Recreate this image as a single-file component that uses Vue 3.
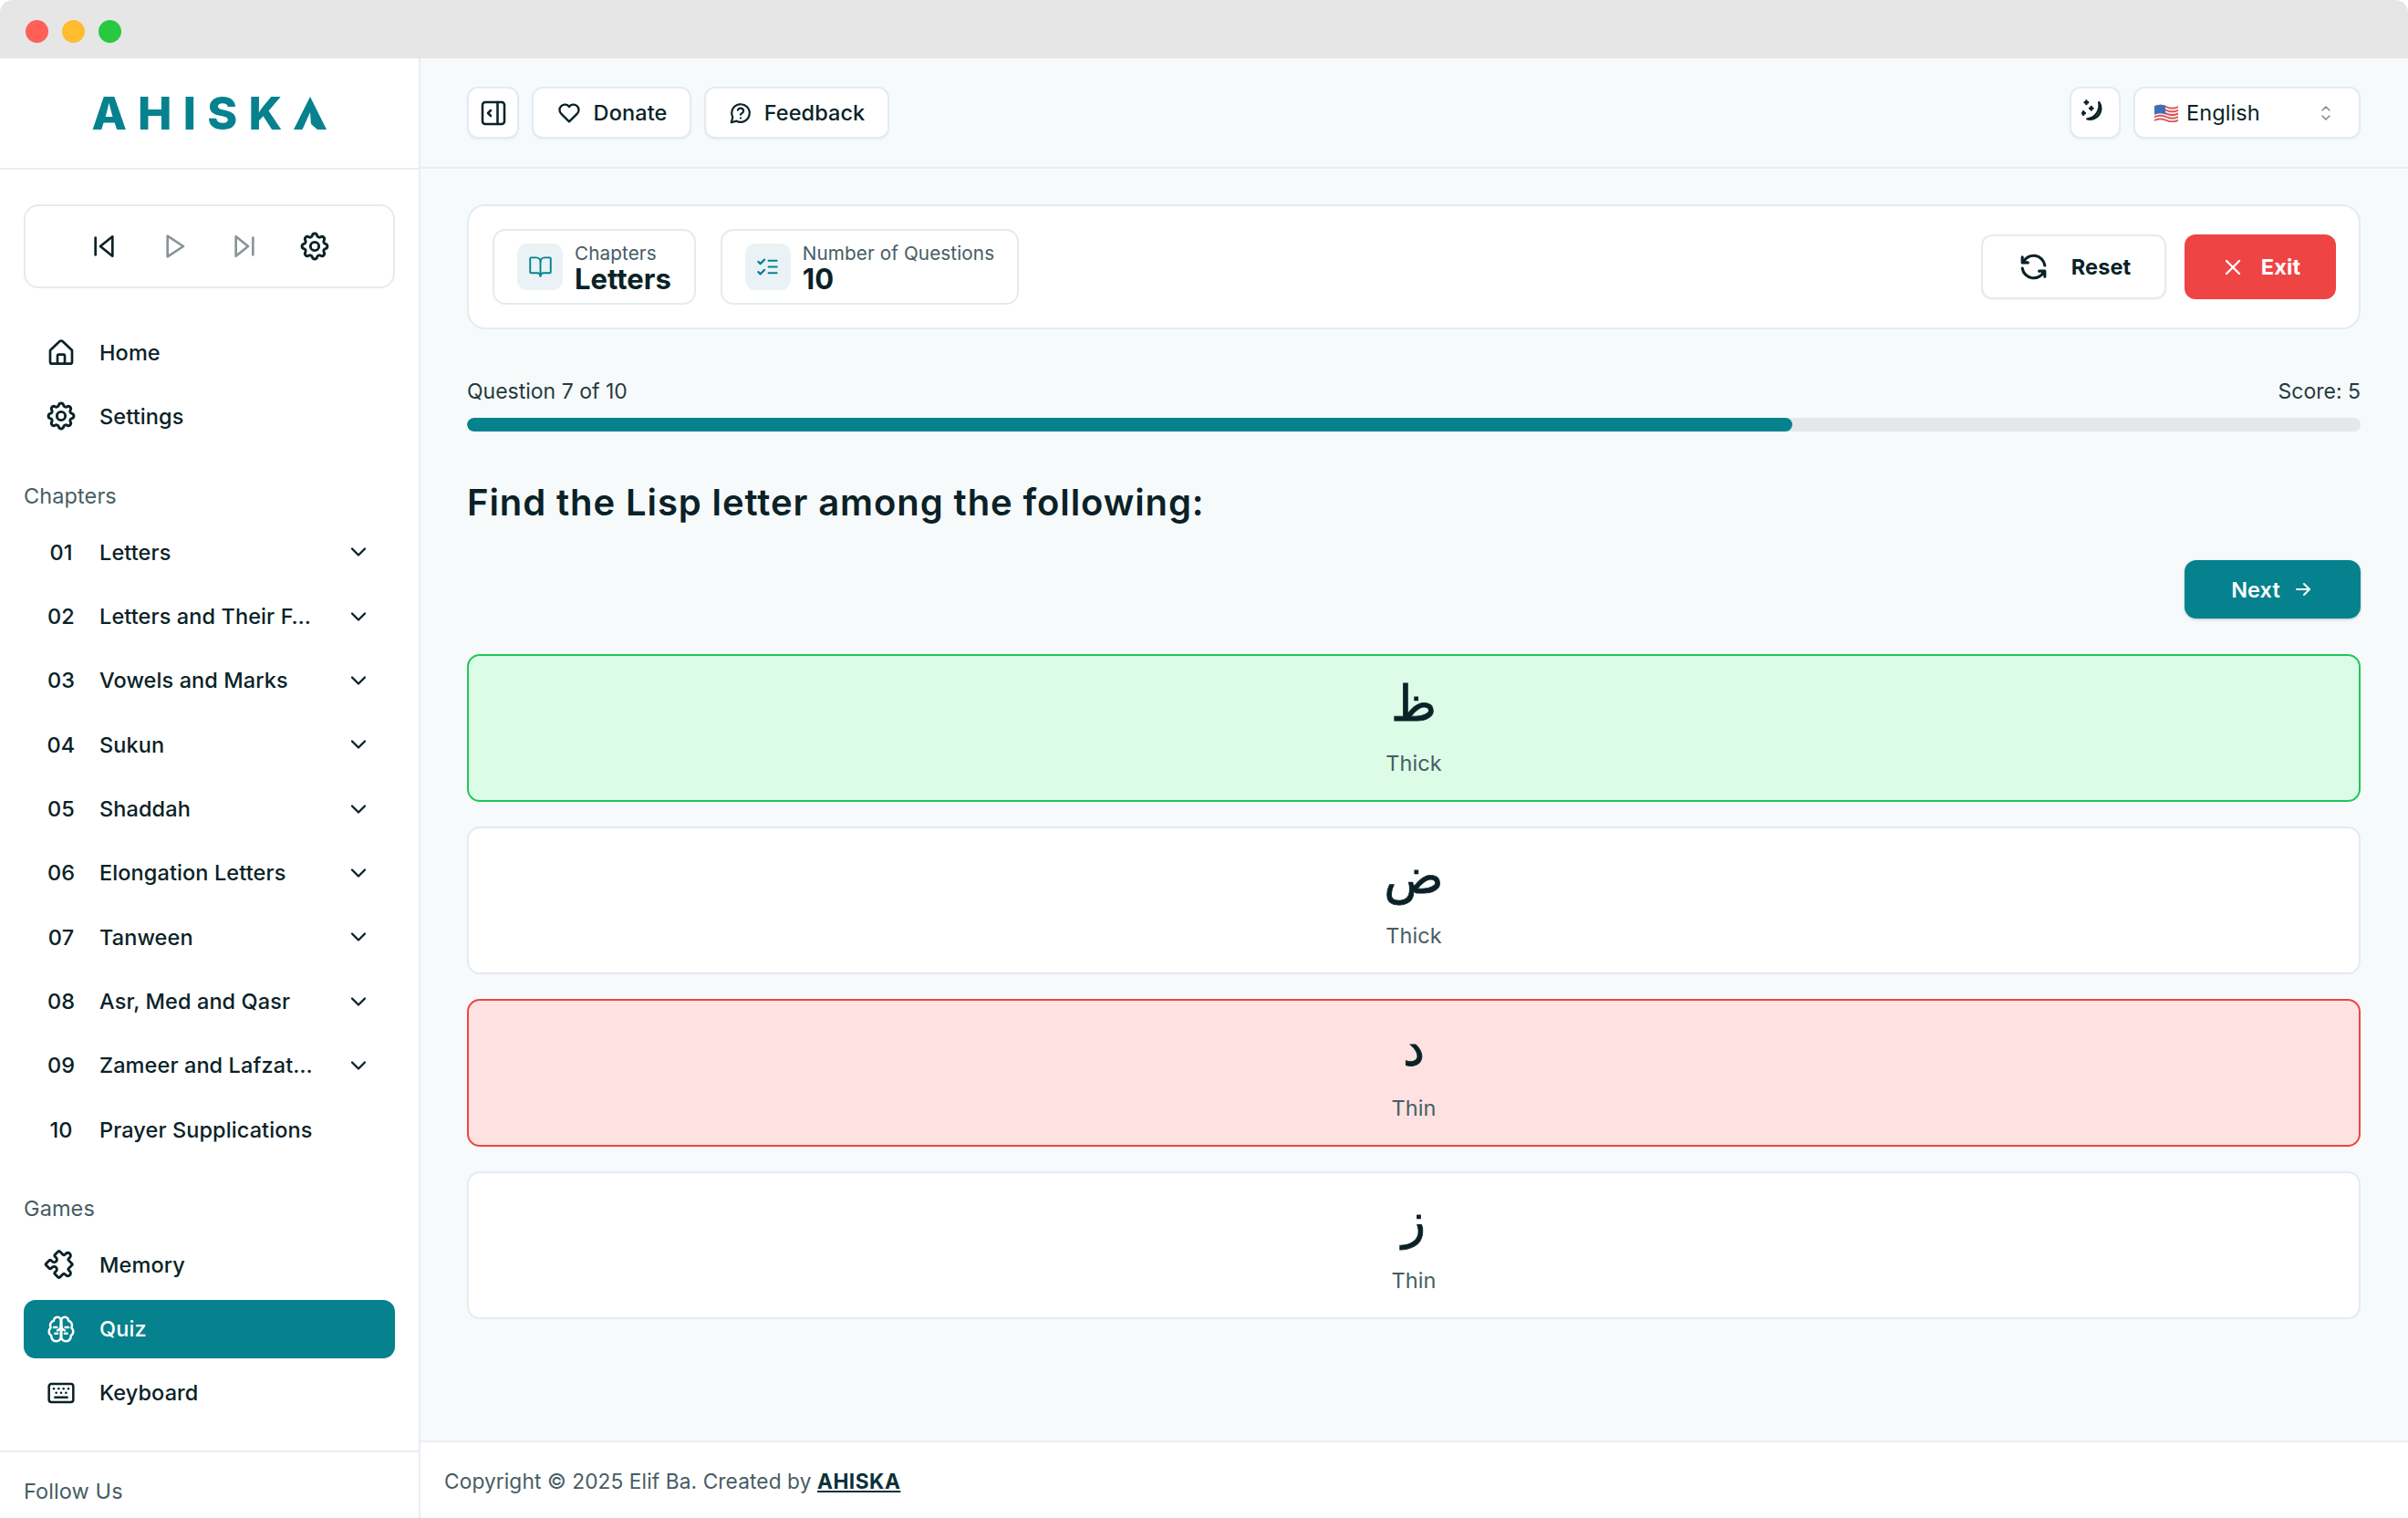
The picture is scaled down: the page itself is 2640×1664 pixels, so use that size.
<script setup>
import { h } from 'vue'

const icons = {
  back: ['M19 4v16l-10-8z', 'M5 5v14'],
  play: ['M6.5 3.5v17l13-8.5z'],
  forward: ['M5 4v16l10-8z', 'M19 5v14'],
  gear: ['M10.325 4.317c.426-1.756 2.924-1.756 3.35 0a1.724 1.724 0 0 0 2.573 1.066c1.543-.94 3.31.826 2.37 2.37a1.724 1.724 0 0 0 1.065 2.572c1.756.426 1.756 2.924 0 3.35a1.724 1.724 0 0 0-1.066 2.573c.94 1.543-.826 3.31-2.37 2.37a1.724 1.724 0 0 0-2.572 1.065c-.426 1.756-2.924 1.756-3.35 0a1.724 1.724 0 0 0-2.573-1.066c-1.543.94-3.31-.826-2.37-2.37a1.724 1.724 0 0 0-1.065-2.572c-1.756-.426-1.756-2.924 0-3.35a1.724 1.724 0 0 0 1.066-2.573c-.94-1.543.826-3.31 2.37-2.37c1 .608 2.296.07 2.572-1.065z', 'M9 12a3 3 0 1 0 6 0a3 3 0 1 0-6 0'],
  home: ['M3 10.5 10.7 3.2a2 2 0 0 1 2.6 0L21 10.5V20a1.5 1.5 0 0 1-1.5 1.5h-15A1.5 1.5 0 0 1 3 20z', 'M9 21.5V15a1 1 0 0 1 1-1h4a1 1 0 0 1 1 1v6.5'],
  puzzle: ['M4 7h3a1 1 0 0 0 1-1v-1a2 2 0 0 1 4 0v1a1 1 0 0 0 1 1h3a1 1 0 0 1 1 1v3a1 1 0 0 0 1 1h1a2 2 0 0 1 0 4h-1a1 1 0 0 0-1 1v3a1 1 0 0 1-1 1h-3a1 1 0 0 1-1-1v-1a2 2 0 0 0-4 0v1a1 1 0 0 1-1 1h-3a1 1 0 0 1-1-1v-3a1 1 0 0 1 1-1h1a2 2 0 0 0 0-4h-1a1 1 0 0 1-1-1v-3a1 1 0 0 1 1-1'],
  brain: ['M12 5a3 3 0 1 0-5.997.125 4 4 0 0 0-2.526 5.77 4 4 0 0 0 .556 6.588A4 4 0 1 0 12 18Z', 'M12 5a3 3 0 1 1 5.997.125 4 4 0 0 1 2.526 5.77 4 4 0 0 1-.556 6.588A4 4 0 1 1 12 18Z', 'M12 5v13', 'M15 13a4.5 4.5 0 0 1-3-4 4.5 4.5 0 0 1-3 4', 'M6 10.5h2.5', 'M15.5 10.5H18', 'M7 15.5h2', 'M15 15.5h2'],
  keyboard: ['M4 4.5h16a2 2 0 0 1 2 2v11a2 2 0 0 1-2 2H4a2 2 0 0 1-2-2v-11a2 2 0 0 1 2-2z', 'M6 8.5h.01', 'M10 8.5h.01', 'M14 8.5h.01', 'M18 8.5h.01', 'M8 11.8h.01', 'M12 11.8h.01', 'M16 11.8h.01', 'M7 15.5h10'],
  chevron: ['M6 9l6 6l6-6'],
  panel: ['M4 6a2 2 0 0 1 2-2h12a2 2 0 0 1 2 2v12a2 2 0 0 1-2 2H6a2 2 0 0 1-2-2z', 'M15 4v16', 'M10 10l-2 2l2 2'],
  heart: ['M19.5 12.572 12 20l-7.5-7.428a5 5 0 1 1 7.5-6.566a5 5 0 1 1 7.5 6.572'],
  help: ['M7.9 20A9 9 0 1 0 4 16.1L2.5 21.5Z', 'M9.09 9a3 3 0 0 1 5.83 1c0 2-3 2.5-3 3.5', 'M12 17h.01'],
  book: ['M12 7v14', 'M3 18a1 1 0 0 1-1-1V4a1 1 0 0 1 1-1h5a4 4 0 0 1 4 4 4 4 0 0 1 4-4h5a1 1 0 0 1 1 1v13a1 1 0 0 1-1 1h-6a3 3 0 0 0-3 3 3 3 0 0 0-3-3z'],
  list: ['M3 17l2 2 4-4', 'M3 7l2 2 4-4', 'M13 6h8', 'M13 12h8', 'M13 18h8'],
  refresh: ['M20 11a8.1 8.1 0 0 0-15.5-2m-.5-4v4h4', 'M4 13a8.1 8.1 0 0 0 15.5 2m.5 4v-4h-4'],
  close: ['M18 6 6 18', 'M6 6l12 12'],
  arrow: ['M5 12h14', 'M13 18l6-6', 'M13 6l6 6'],
  selector: ['M8 9l4-4l4 4', 'M16 15l-4 4l-4-4'],
  moon: ['M15.4 2.6A9.5 9.5 0 0 1 5.1 17.1A12 12 0 0 0 15.4 2.6z', 'M4.3 1.2v2.8M2.9 2.6h2.8', 'M8.6 6.3v2.8M7.2 7.7h2.8', 'M1.7 10.6v2.8M.3 12h2.8'],
}

const Icon = (props) =>
  h('svg', { viewBox: '0 0 24 24', fill: 'none', stroke: 'currentColor', 'stroke-width': props.sw || 2, 'stroke-linecap': 'round', 'stroke-linejoin': 'round' },
    icons[props.name].map((d) => h('path', { d })))
Icon.props = ['name', 'sw']

const chapters = [
  ['01', 'Letters', true],
  ['02', 'Letters and Their F…', true],
  ['03', 'Vowels and Marks', true],
  ['04', 'Sukun', true],
  ['05', 'Shaddah', true],
  ['06', 'Elongation Letters', true],
  ['07', 'Tanween', true],
  ['08', 'Asr, Med and Qasr', true],
  ['09', 'Zameer and Lafzat…', true],
  ['10', 'Prayer Supplications', false],
]

const games = [
  { icon: 'puzzle', label: 'Memory' },
  { icon: 'brain', label: 'Quiz', active: true },
  { icon: 'keyboard', label: 'Keyboard' },
]

const options = [
  { glyph: 'ظ', label: 'Thick', state: 'correct' },
  { glyph: 'ض', label: 'Thick', state: '' },
  { glyph: 'د', label: 'Thin', state: 'wrong' },
  { glyph: 'ز', label: 'Thin', state: '' },
]

const stripes = [2.2, 5.9, 9.6, 13.3, 17]
</script>

<template>
  <div class="window">
    <div class="titlebar">
      <span class="dot red"></span>
      <span class="dot yellow"></span>
      <span class="dot green"></span>
    </div>

    <div class="body">
      <aside class="sidebar">
        <div class="logo">
          <span class="logo-text">AHISK</span>
          <svg class="logo-mark" viewBox="0 0 36 36"><path d="M18 0 36 36H26L19 30 18 17 9.5 36H0z" /></svg>
        </div>

        <div class="nav-area">
          <div class="player">
            <Icon name="back" class="ic" />
            <Icon name="play" class="ic dim" />
            <Icon name="forward" class="ic dim" />
            <Icon name="gear" class="ic gear" sw="1.9" />
          </div>

          <div class="rows top-rows">
            <div class="row"><Icon name="home" class="ic" /><span>Home</span></div>
            <div class="row"><Icon name="gear" class="ic gear" sw="1.9" /><span>Settings</span></div>
          </div>

          <div class="section-title chapters-title">Chapters</div>
          <div class="rows">
            <div v-for="c in chapters" :key="c[0]" class="row">
              <span class="num">{{ c[0] }}</span>
              <span class="grow">{{ c[1] }}</span>
              <Icon v-if="c[2]" name="chevron" class="chev" />
            </div>
          </div>

          <div class="section-title games-title">Games</div>
          <div class="rows">
            <div v-for="g in games" :key="g.label" class="row" :class="{ active: g.active }">
              <Icon :name="g.icon" class="ic" :class="{ puzzle: g.icon === 'puzzle' }" sw="1.9" />
              <span>{{ g.label }}</span>
            </div>
          </div>
        </div>

        <div class="follow"><span class="section-title">Follow Us</span></div>
      </aside>

      <main class="main">
        <header class="header">
          <div class="group">
            <button class="hbtn square"><Icon name="panel" class="ic-p" sw="1.7" /></button>
            <button class="hbtn donate"><Icon name="heart" class="ic-h" /><span>Donate</span></button>
            <button class="hbtn feedback"><Icon name="help" class="ic-f" /><span>Feedback</span></button>
          </div>
          <div class="group">
            <button class="hbtn moon-btn"><Icon name="moon" class="ic-m" sw="2" /></button>
            <div class="hbtn lang">
              <svg class="flag" viewBox="0 0 26 20">
                <path d="M0 2.2q6.5-3 13 0t13 0v15.4q-6.5 3-13 0t-13 0z" fill="#f6f0f0" />
                <path v-for="y in stripes" :key="y" :d="`M0 ${y}q6.5-3 13 0t13 0v1.8q-6.5 3-13 0t-13 0z`" fill="#dc4a55" />
                <path d="M0 2.2q6-2.8 12-.4v9.6q-6-2.2-12 .3z" fill="#3f6fb8" />
              </svg>
              <span class="grow">English</span>
              <Icon name="selector" class="sel" sw="1.5" />
            </div>
          </div>
        </header>

        <div class="content">
          <section class="card">
            <div class="chips">
              <div class="chip">
                <span class="tile"><Icon name="book" class="ic-t" sw="1.7" /></span>
                <div class="chip-text"><span class="chip-label">Chapters</span><strong class="chip-value">Letters</strong></div>
              </div>
              <div class="chip">
                <span class="tile"><Icon name="list" class="ic-t" sw="1.9" /></span>
                <div class="chip-text"><span class="chip-label">Number of Questions</span><strong class="chip-value">10</strong></div>
              </div>
            </div>
            <div class="actions">
              <button class="action reset"><Icon name="refresh" class="ic-a" /><span>Reset</span></button>
              <button class="action exit"><Icon name="close" class="ic-x" /><span>Exit</span></button>
            </div>
          </section>

          <div class="progress-info"><span>Question 7 of 10</span><span>Score: 5</span></div>
          <div class="track"><div class="fill" :style="{ width: '70%' }"></div></div>

          <h1 class="question">Find the Lisp letter among the following:</h1>

          <div class="next-wrap">
            <button class="next"><span>Next</span><Icon name="arrow" class="ic-n" /></button>
          </div>

          <div class="options">
            <div v-for="(o, i) in options" :key="i" class="option" :class="o.state">
              <span class="glyph" lang="ar" dir="rtl">{{ o.glyph }}</span>
              <span class="opt-label">{{ o.label }}</span>
            </div>
          </div>
        </div>

        <footer class="footer">Copyright © 2025 Elif Ba. Created by&nbsp;<a class="brand">AHISKA</a></footer>
      </main>
    </div>
  </div>
</template>

<style>
html, body { margin: 0; background: #fff; }
</style>

<style scoped>
* { box-sizing: border-box; }
.window {
  width: 2640px; height: 1664px; overflow: hidden; display: flex; flex-direction: column;
  font-family: Inter, "Noto Sans", sans-serif; font-size: 23.5px; font-weight: 500; color: #0a2227;
  background: #fff; letter-spacing: .1px;
}
button { font: inherit; color: inherit; letter-spacing: inherit; cursor: pointer; }
svg { display: block; flex: none; }

.titlebar { height: 64px; background: #e6e6e6; display: flex; align-items: center; gap: 15px; padding: 4px 0 0 27.5px; border-radius: 14px 14px 0 0; flex: none; }
.dot { width: 25px; height: 25px; border-radius: 50%; }
.red { background: #ff5f57; }
.yellow { background: #febc2e; }
.green { background: #28c840; }

.body { flex: 1; display: flex; min-height: 0; }

.sidebar { width: 461px; flex: none; border-right: 2px solid #e8edf2; display: flex; flex-direction: column; background: #fff; }
.logo { height: 122px; flex: none; border-bottom: 2px solid #e8edf2; display: flex; align-items: center; justify-content: center; gap: 0; padding-right: 1px; }
.logo-text { font-weight: 800; font-size: 50px; letter-spacing: 12.2px; line-height: 1; color: #05828e; }
.logo-mark { width: 36px; height: 36px; fill: #05828e; }

.nav-area { flex: 1; min-height: 0; padding: 38px 26px 0; }
.player { height: 92px; border: 2px solid #e5eaf2; border-radius: 16px; display: flex; align-items: center; justify-content: center; gap: 45px; }
.ic { width: 32px; height: 32px; }
.gear { transform: scale(1.16); }
.dim { opacity: .48; }

.rows { display: flex; flex-direction: column; gap: 6.33px; }
.top-rows { margin-top: 38px; }
.row { height: 64px; display: flex; align-items: center; gap: 26px; padding: 0 26px 0 25px; border-radius: 13px; }
.row.active { background: #05828e; color: #fff; }
.puzzle { transform: translateX(2px) rotate(45deg) scale(1.14); }
.num { width: 32px; text-align: center; flex: none; }
.grow { flex: 1; white-space: nowrap; }
.chev { width: 28px; height: 28px; }

.section-title { font-size: 23.5px; font-weight: 400; color: #465d63; line-height: 32px; display: block; }
.chapters-title { margin: 40px 0 13px; }
.games-title { margin: 39px 0 13px; }

.follow { height: 74px; flex: none; border-top: 2px solid #e8edf2; padding: 27px 26px 0; }

.main { flex: 1; min-width: 0; display: flex; flex-direction: column; background: #f7fafb; }
.header { height: 121px; flex: none; border-bottom: 2px solid #e8edf2; padding: 0 52px 0 51px; display: flex; align-items: center; justify-content: space-between; }
.group { display: flex; align-items: center; gap: 14px; }
.hbtn { height: 57px; background: #fff; border: 2px solid #e5eaf2; border-radius: 12px; box-shadow: 0 1px 2px rgba(16, 40, 60, .06); display: flex; align-items: center; gap: 13px; padding: 0; }
.hbtn.square { width: 57px; justify-content: center; }
.donate { width: 175px; justify-content: center; }
.feedback { width: 203px; justify-content: center; }
.moon-btn { width: 56px; justify-content: center; }
.ic-p { width: 36px; height: 36px; }
.ic-h { width: 28px; height: 28px; }
.ic-m { width: 30px; height: 30px; }
.ic-f { width: 26px; height: 26px; }
.lang { width: 249px; padding: 0 24px 0 21px; gap: 9px; font-weight: 400; }
.flag { width: 26px; height: 20px; }
.sel { width: 24px; height: 24px; color: #7f8c90; }

.content { flex: 1; min-height: 0; padding: 39px 52px 0 51px; }
.card { height: 137px; background: #fff; border: 2px solid #e5eaf2; border-radius: 20px; padding: 0 25px 0 26px; display: flex; align-items: center; justify-content: space-between; }
.chips { display: flex; gap: 27px; }
.chip { height: 83px; border: 2px solid #e5eaf2; border-radius: 14px; display: flex; align-items: center; gap: 13px; padding: 0 25px; }
.tile { width: 50px; height: 51px; border-radius: 11px; background: #eaf2f5; display: flex; align-items: center; justify-content: center; color: #05828e; }
.ic-t { width: 27px; height: 27px; }
.chip-text { display: flex; flex-direction: column; }
.chip-label { font-size: 20.7px; line-height: 27px; color: #465d63; font-weight: 400; }
.chip-value { font-size: 31px; line-height: 30px; font-weight: 700; letter-spacing: 0; }

.actions { display: flex; gap: 20px; }
.action { height: 71px; border-radius: 12px; display: flex; align-items: center; justify-content: center; font-weight: 700; }
.reset { width: 203px; background: #fff; border: 2px solid #e5eaf2; gap: 23px; box-shadow: 0 1px 2px rgba(16, 40, 60, .05); }
.exit { width: 166px; background: #ef4444; border: 0; color: #fff; gap: 17px; }
.ic-a { width: 37px; height: 37px; }
.ic-x { width: 28px; height: 28px; }

.progress-info { margin-top: 52px; height: 32px; line-height: 32px; display: flex; justify-content: space-between; color: #243b41; font-size: 23px; font-weight: 400; letter-spacing: 0; }
.track { margin-top: 13px; height: 15px; border-radius: 8px; background: #e5e7eb; overflow: hidden; }
.fill { height: 100%; background: #05828e; border-radius: 8px; }

.question { margin: 50px 0 0; font-size: 40px; line-height: 56px; font-weight: 600; letter-spacing: .9px; }

.next-wrap { margin-top: 35px; display: flex; justify-content: flex-end; }
.next { width: 193px; height: 64px; border: 0; border-radius: 13px; background: #05828e; color: #fff; font-weight: 600; display: flex; align-items: center; justify-content: center; gap: 13px; box-shadow: 0 1px 3px rgba(0, 40, 50, .25); }
.ic-n { width: 24px; height: 24px; }

.options { margin-top: 39px; display: flex; flex-direction: column; gap: 27px; }
.option { height: 162px; background: #fff; border: 2px solid #e5eaf2; border-radius: 14px; display: flex; flex-direction: column; align-items: center; padding-top: 9px; }
.option.correct { background: #dcfce7; border-color: #22c55e; }
.option.wrong { background: #fee2e2; border-color: #ef4444; }
.glyph { height: 93px; line-height: 88px; font-size: 54px; font-weight: 400; -webkit-text-stroke: .8px currentColor; font-family: "DejaVu Sans", serif; letter-spacing: 0; }
.opt-label { height: 32px; line-height: 32px; color: #465d63; font-weight: 400; }

.footer { height: 85px; flex: none; background: #fff; border-top: 2px solid #ebeff2; padding: 27px 0 0 26px; font-size: 22.7px; font-weight: 400; letter-spacing: .1px; line-height: 32px; color: #465d63; display: flex; align-items: flex-start; white-space: nowrap; }
.brand { font-weight: 700; color: #0b3138; letter-spacing: .5px; text-decoration: underline; }
</style>
